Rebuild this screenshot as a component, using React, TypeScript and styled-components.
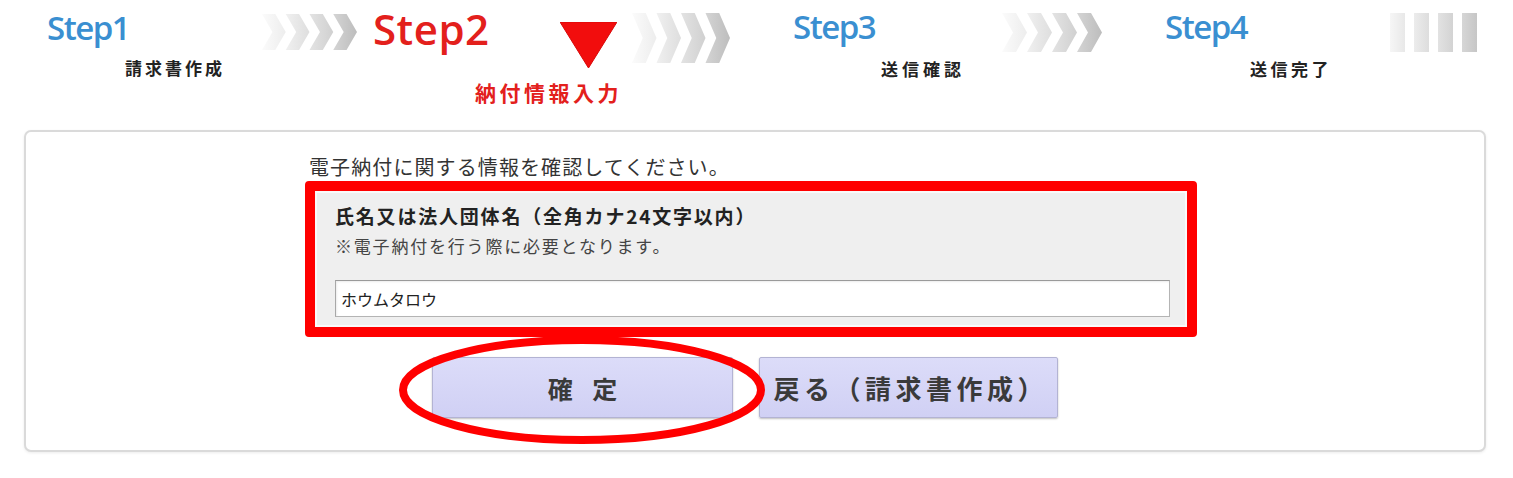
import React from "react";
import styled, { createGlobalStyle } from "styled-components";

const GlobalStyle = createGlobalStyle`
  html, body { margin: 0; padding: 0; background: #ffffff; }
  body { font-family: "Noto Sans CJK JP", "Noto Sans", sans-serif; color: #333; }
  * { box-sizing: border-box; }
`;

const Page = styled.div`
  width: 1513px;
  height: 478px;
  overflow: hidden;
  background: #ffffff;
`;

const StepBar = styled.div`
  display: flex;
  align-items: flex-start;
  height: 130px;
`;

const StepBlock = styled.div<{ $width: number; $indent: number; $top: number }>`
  flex: 0 0 ${(p) => p.$width}px;
  padding-left: ${(p) => p.$indent}px;
  padding-top: ${(p) => p.$top}px;
  display: flex;
  flex-direction: column;
`;

const StepTitle = styled.div<{ $size: number; $color: string; $weight: number; $spacing: number }>`
  font-family: "Open Sans", "Noto Sans", sans-serif;
  font-size: ${(p) => p.$size}px;
  line-height: 1;
  font-weight: ${(p) => p.$weight};
  letter-spacing: ${(p) => p.$spacing}px;
  color: ${(p) => p.$color};
  white-space: nowrap;
`;

const TitleRow = styled.div`
  display: grid;
  grid-template-columns: 187px 57px;
  align-items: start;
`;

const Marker = styled.svg`
  display: block;
  margin-top: 14px;
`;

const SubLabel = styled.div<{ $indent: number; $gap: number; $size: number; $color: string; $spacing: number }>`
  margin-left: ${(p) => p.$indent}px;
  margin-top: ${(p) => p.$gap}px;
  font-family: "Noto Sans CJK JP", sans-serif;
  font-size: ${(p) => p.$size}px;
  line-height: 1;
  font-weight: 700;
  letter-spacing: ${(p) => p.$spacing}px;
  color: ${(p) => p.$color};
  white-space: nowrap;
`;

const Arrows = styled.svg<{ $top: number }>`
  display: block;
  flex: 0 0 auto;
  margin-top: ${(p) => p.$top}px;
`;

const Panel = styled.div`
  margin-left: 24px;
  width: 1462px;
  height: 322px;
  border: 2px solid #dadada;
  border-radius: 7px;
  box-shadow: 0 1px 3px rgba(0, 0, 0, 0.08);
  background: #ffffff;
  padding: 23px 0 0 279px;
`;

const Column = styled.div`
  width: 892px;
  display: flex;
  flex-direction: column;
`;

const Intro = styled.div`
  padding-left: 4px;
  font-size: 20px;
  line-height: 24px;
  letter-spacing: 1.1px;
  color: #333;
  white-space: nowrap;
`;

const RedFrame = styled.div`
  margin-top: 2px;
  border: 10px solid #ff0000;
  border-radius: 4px;
  padding: 2px;
  background: #fafafa;
`;

const GrayCell = styled.div`
  background: #efefef;
  padding: 11px 15px 8px 18px;
  display: flex;
  flex-direction: column;
`;

const FieldTitle = styled.div`
  font-size: 19px;
  line-height: 24px;
  font-weight: 700;
  letter-spacing: 1.8px;
  color: #222;
  white-space: nowrap;
`;

const FieldNote = styled.div`
  margin-top: 7px;
  font-size: 17px;
  line-height: 22px;
  letter-spacing: 1.8px;
  color: #444;
  white-space: nowrap;
`;

const NameInput = styled.input`
  margin-top: 23px;
  width: 100%;
  height: 37px;
  border: 1px solid #b4b4b4;
  border-top-color: #9a9a9a;
  border-left-color: #a8a8a8;
  box-shadow: inset 1px 1px 2px rgba(0, 0, 0, 0.08);
  background: #ffffff;
  padding: 0 5px;
  font-family: "Noto Sans CJK JP", sans-serif;
  font-size: 16px;
  color: #222;
  outline: none;
`;

const ButtonRow = styled.div`
  display: flex;
  gap: 26px;
  margin-top: 20px;
  padding-left: 127px;
`;

const ButtonWrap = styled.div`
  position: relative;
`;

const ActionButton = styled.button<{ $width: number; $spacing: number; $size: number }>`
  display: block;
  width: ${(p) => p.$width}px;
  height: 61px;
  border: 1px solid #b3b3d3;
  border-radius: 2px;
  background: linear-gradient(#dcdcf9, #d0d0f4);
  box-shadow: 0 1px 2px rgba(0, 0, 0, 0.25);
  font-family: "Noto Sans CJK JP", sans-serif;
  font-size: ${(p) => p.$size}px;
  font-weight: 700;
  letter-spacing: ${(p) => p.$spacing}px;
  color: #3a3a3a;
  padding: 0 0 0 ${(p) => p.$spacing}px;
  cursor: pointer;
  white-space: pre;
`;

const Ring = styled.svg`
  position: absolute;
  left: -33px;
  top: -21px;
  pointer-events: none;
`;

function ChevronSet({ id, width, height, top }: { id: string; width: number; height: number; top: number }) {
  const shades = [
    ["#fbfbfb", "#ededed"],
    ["#f0f0f0", "#dedede"],
    ["#e3e3e3", "#d0d0d0"],
    ["#d4d4d4", "#bdbdbd"],
  ];
  return (
    <Arrows $top={top} width={width} height={height} viewBox="0 0 100 40" preserveAspectRatio="none">
      <defs>
        {shades.map((s, i) => (
          <linearGradient key={i} id={`${id}-g${i}`} x1="0" y1="0" x2="1" y2="0">
            <stop offset="0" stopColor={s[0]} />
            <stop offset="1" stopColor={s[1]} />
          </linearGradient>
        ))}
      </defs>
      {shades.map((_, i) => {
        const x = i * 25;
        return (
          <polygon
            key={i}
            points={`${x},0 ${x + 14},0 ${x + 25},20 ${x + 14},40 ${x},40 ${x + 11},20`}
            fill={`url(#${id}-g${i})`}
          />
        );
      })}
    </Arrows>
  );
}

function EndBars() {
  const shades = [
    ["#f6f6f6", "#e8e8e8"],
    ["#ececec", "#dddddd"],
    ["#e2e2e2", "#d3d3d3"],
    ["#d6d6d6", "#c6c6c6"],
  ];
  return (
    <Arrows $top={13} width={88} height={39} viewBox="0 0 88 39">
      <defs>
        {shades.map((s, i) => (
          <linearGradient key={i} id={`bars-g${i}`} x1="0" y1="0" x2="1" y2="0">
            <stop offset="0" stopColor={s[0]} />
            <stop offset="1" stopColor={s[1]} />
          </linearGradient>
        ))}
      </defs>
      {shades.map((_, i) => (
        <rect key={i} x={i * 24} y={0} width={15} height={39} fill={`url(#bars-g${i})`} />
      ))}
    </Arrows>
  );
}

const BLUE = "#3a8fd1";
const RED = "#e3201c";

export default function App() {
  return (
    <Page>
      <GlobalStyle />
      <StepBar>
        <StepBlock $width={262} $indent={47} $top={11}>
          <StepTitle $size={33} $color={BLUE} $weight={600} $spacing={-1.5}>Step1</StepTitle>
          <SubLabel $indent={78} $gap={15} $size={17} $color="#222" $spacing={3}>請求書作成</SubLabel>
        </StepBlock>
        <ChevronSet id="c1" width={95} height={36} top={14} />
        <StepBlock $width={275} $indent={16} $top={8}>
          <TitleRow>
            <StepTitle $size={42} $color={RED} $weight={600} $spacing={0.5}>Step2</StepTitle>
            <Marker width={57} height={46} viewBox="0 0 57 46">
              <polygon points="0,0 57,0 28.5,46" fill="#f20d0d" stroke="#d80808" strokeWidth="1" />
            </Marker>
          </TitleRow>
          <SubLabel $indent={102} $gap={14} $size={21} $color={RED} $spacing={3.5}>納付情報入力</SubLabel>
        </StepBlock>
        <ChevronSet id="c2" width={98} height={50} top={13} />
        <StepBlock $width={272} $indent={63} $top={10}>
          <StepTitle $size={33} $color={BLUE} $weight={600} $spacing={-1.5}>Step3</StepTitle>
          <SubLabel $indent={88} $gap={17} $size={17} $color="#222" $spacing={4}>送信確認</SubLabel>
        </StepBlock>
        <ChevronSet id="c3" width={100} height={39} top={13} />
        <StepBlock $width={288} $indent={63} $top={10}>
          <StepTitle $size={33} $color={BLUE} $weight={600} $spacing={-1.5}>Step4</StepTitle>
          <SubLabel $indent={85} $gap={17} $size={17} $color="#222" $spacing={3.5}>送信完了</SubLabel>
        </StepBlock>
        <EndBars />
      </StepBar>
      <Panel>
        <Column>
          <Intro>電子納付に関する情報を確認してください。</Intro>
          <RedFrame>
            <GrayCell>
              <FieldTitle>氏名又は法人団体名（全角カナ24文字以内）</FieldTitle>
              <FieldNote>※電子納付を行う際に必要となります。</FieldNote>
              <NameInput type="text" defaultValue="ホウムタロウ" />
            </GrayCell>
          </RedFrame>
          <ButtonRow>
            <ButtonWrap>
              <ActionButton $width={301} $spacing={7} $size={25}>確 定</ActionButton>
              <Ring width={366} height={108} viewBox="0 0 366 108">
                <ellipse cx="183" cy="54" rx="179" ry="50" fill="none" stroke="#ff0000" strokeWidth="8" />
              </Ring>
            </ButtonWrap>
            <ActionButton $width={299} $spacing={4.5} $size={26}>戻る（請求書作成）</ActionButton>
          </ButtonRow>
        </Column>
      </Panel>
    </Page>
  );
}
